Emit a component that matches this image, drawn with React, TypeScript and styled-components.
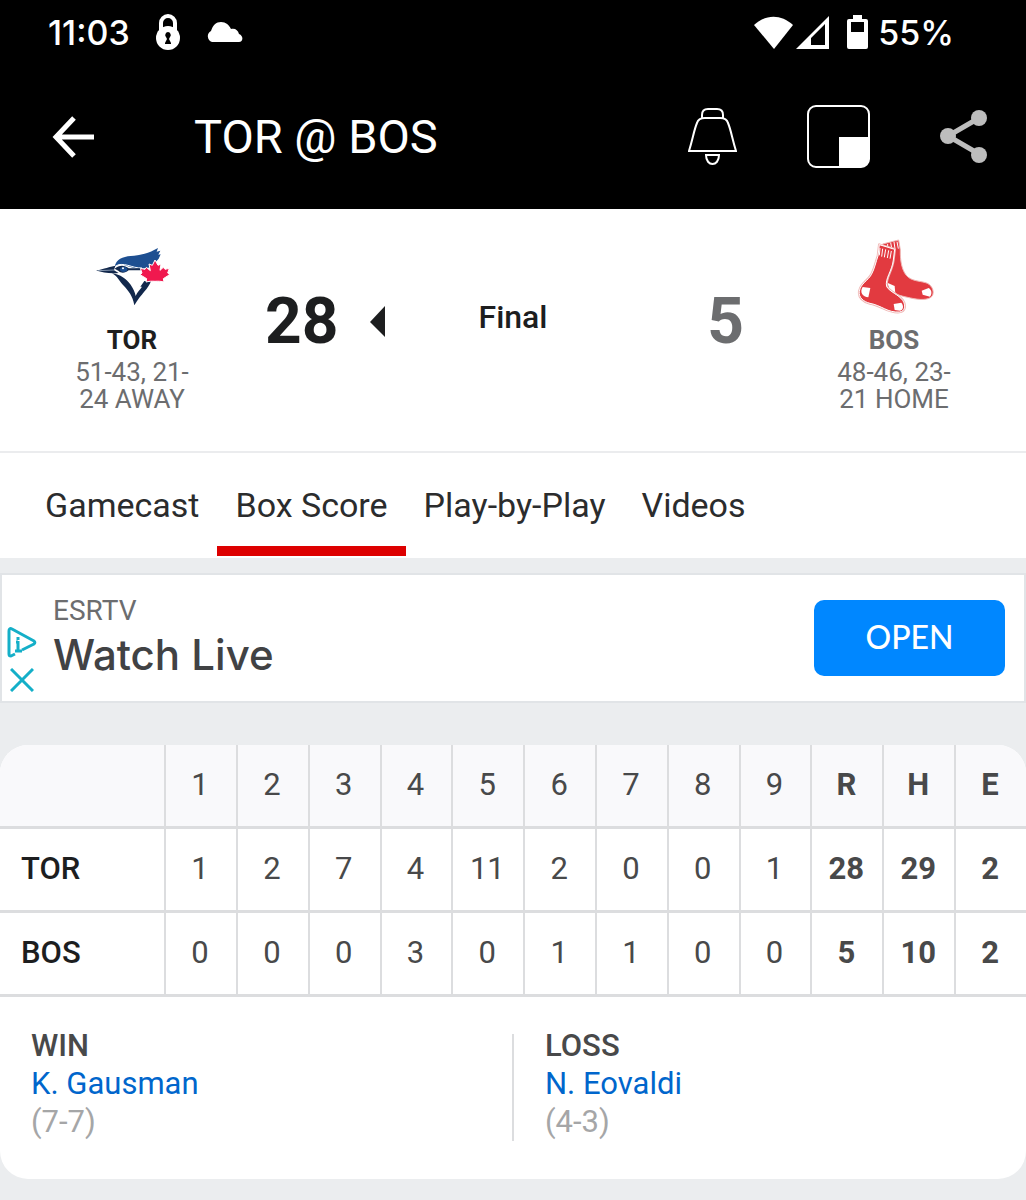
import React, { FC } from "react";
import styled, { createGlobalStyle } from "styled-components";

const GlobalStyle = createGlobalStyle`
  *,
  *::before,
  *::after {
    box-sizing: border-box;
  }

  body {
    margin: 0;
    background-color: #ebedef;
    color: #48494a;
    font-family: Roboto, "Liberation Sans", sans-serif;
  }

  button {
    border: 0;
    padding: 0;
    background: none;
    color: inherit;
    font: inherit;
    cursor: pointer;
  }

  svg {
    display: block;
    flex-shrink: 0;
  }
`;

const TopBar = styled.header`
  background-color: #000;
  color: #fff;
`;

const StatusBar = styled.div`
  display: flex;
  align-items: center;
  justify-content: space-between;
  height: 64px;
  padding: 0 72px 0 48px;
  font-family: Inter, "Liberation Sans", sans-serif;
  font-size: 34px;
  font-weight: 500;
`;

const StatusGroup = styled.div<{ $gap: number }>`
  display: flex;
  align-items: center;
  gap: ${({ $gap }) => $gap}px;
`;

const Toolbar = styled.div`
  display: flex;
  align-items: center;
  height: 145px;
  padding: 0 38px 0 52px;
`;

const Title = styled.h1`
  flex-grow: 1;
  margin: 0 0 0 99px;
  font-size: 47px;
  font-weight: 400;
`;

const Actions = styled.div`
  display: flex;
  align-items: center;
  gap: 70px;
`;

const Matchup = styled.section`
  display: grid;
  grid-template-columns: 264px 1fr auto 1fr 264px;
  align-items: center;
  padding: 29px 0 38px;
  border-bottom: 2px solid #ebecee;
  background-color: #fff;
`;

const TeamStyles = styled.div<{ $winner?: boolean }>`
  display: flex;
  flex-direction: column;
  align-items: center;
  color: #6c6d6f;
  font-size: 26px;
  line-height: 27px;
  text-align: center;

  .team {
    &__logo {
      display: flex;
      align-items: center;
      height: 84px;
    }

    &__name {
      margin: 5px 0;
      color: ${({ $winner }) => ($winner ? "#1d1e1f" : "#6c6d6f")};
      font-weight: 700;
    }

    &__record {
      width: 130px;
    }
  }
`;

const Score = styled.div<{ $winner?: boolean }>`
  display: flex;
  align-items: center;
  justify-content: ${({ $winner }) => ($winner ? "flex-start" : "flex-end")};
  gap: 32px;
  padding: 0 18px 8px 1px;
  color: ${({ $winner }) => ($winner ? "#1d1e1f" : "#6c6d6f")};
  font-size: 64px;
  font-weight: 700;
`;

const GameStatus = styled.div`
  padding-bottom: 18px;
  color: #1d1e1f;
  font-size: 32px;
  font-weight: 500;
`;

const Tabs = styled.nav`
  display: flex;
  padding: 0 27px 2px;
  background-color: #fff;
`;

const Tab = styled.button<{ $active?: boolean }>`
  height: 103px;
  padding: 10px 18px 0;
  border-bottom: 10px solid ${({ $active }) => ($active ? "#d00" : "transparent")};
  color: #2b2c2d;
  font-size: 34px;
`;

const Ad = styled.aside`
  display: flex;
  align-items: center;
  justify-content: space-between;
  min-height: 130px;
  margin: 15px 0 42px;
  padding: 0 19px 0 5px;
  border: 2px solid #e1e4e7;
  background-color: #fff;
`;

const AdBody = styled.div`
  display: flex;
  align-items: center;
  gap: 16px;
`;

const AdControls = styled.div`
  display: flex;
  flex-direction: column;
  align-items: center;
  gap: 10px;
  padding-top: 42px;
`;

const AdText = styled.div`
  padding-top: 2px;

  .ad {
    &__brand {
      color: #6c6d6f;
      font-size: 28px;
      line-height: 32px;
    }

    &__headline {
      color: #414244;
      font-family: Inter, sans-serif;
      font-size: 42px;
      font-weight: 500;
      line-height: 56px;
    }
  }
`;

const OpenButton = styled.button`
  && {
    width: 191px;
    height: 76px;
    padding-bottom: 4px;
    border-radius: 10px;
    background-color: #0087ff;
    color: #fff;
    font-family: Lato, sans-serif;
    font-size: 32px;
    font-weight: 500;
  }
`;

const Card = styled.main`
  overflow: hidden;
  margin-bottom: 21px;
  border-radius: 28px;
  background-color: #fff;
`;

const LineScore = styled.table`
  width: 100%;
  border-collapse: separate;
  border-spacing: 0;
  table-layout: fixed;
  font-size: 31px;

  th,
  td {
    height: 84px;
    padding: 0 2px 2px 0;
    border-bottom: 3px solid #dcdddf;
    border-left: 2px solid #dcdddf;
    text-align: center;
  }

  thead th,
  thead td {
    background-color: #f9f9fb;
    font-weight: 400;
  }

  th:first-child,
  td:first-child {
    width: 16%;
    padding-left: 21px;
    border-left: 0;
    text-align: left;
  }

  tbody th {
    color: #1d1e1f;
    font-weight: 500;
  }

  thead th:nth-last-child(-n + 3),
  td:nth-last-child(-n + 3) {
    font-weight: 700;
  }
`;

const Decisions = styled.div`
  display: grid;
  grid-template-columns: 1fr 2px 1fr;
  padding: 30px 0 38px;
  font-size: 31px;
  line-height: 38px;
`;

const DecisionDivider = styled.div`
  margin-top: 7px;
  background-color: #dcdddf;
`;

const DecisionStyles = styled.div`
  padding-left: 31px;

  .decision {
    &__label {
      font-weight: 500;
    }

    &__record {
      color: #a5a6a7;
    }
  }

  a {
    color: #06c;
    text-decoration: none;
  }
`;

const LockIcon = () => (
  <svg width="24" height="37" viewBox="0 0 24 37" fill="none">
    <path d="M5 17V9a7 7 0 0 1 14 0v8" stroke="#fff" strokeWidth="4" />
    <circle cx="12" cy="24" r="12" fill="#fff" />
    <path d="M12 18a3 3 0 0 1 2 5l-1 2 2 4v1H9v-1l2-4-1-2a3 3 0 0 1 2-5z" fill="#000" />
  </svg>
);

const CloudIcon = () => (
  <svg width="37" height="21" viewBox="0 0 37 21" fill="#fff">
    <path d="M6 20a6 6 0 0 1-1-11C7 3 10 0 15 0c5 0 8 3 10 7 4-1 7 1 8 5 5 2 4 8 0 8z" />
  </svg>
);

const WifiIcon = () => (
  <svg width="39" height="33" viewBox="0 0 39 33" fill="#fff">
    <path d="M0 9C12-2 27-2 39 9L20 33z" />
  </svg>
);

const SignalIcon = () => (
  <svg width="33" height="33" viewBox="0 0 33 33">
    <path d="M33 0v33H0zM29 8 15 22v7h14z" fill="#fff" fillRule="evenodd" />
  </svg>
);

const BatteryIcon = () => (
  <svg width="21" height="34" viewBox="0 0 21 34">
    <path
      d="M6 0h9v4h4a2 2 0 0 1 2 2v26a2 2 0 0 1-2 2H2a2 2 0 0 1-2-2V6a2 2 0 0 1 2-2h4zM4 7v10h13V7z"
      fill="#fff"
      fillRule="evenodd"
    />
  </svg>
);

const BackIcon = () => (
  <svg width="43" height="42" viewBox="0 0 43 42" fill="none" stroke="#fff" strokeWidth="5">
    <path d="M22 2 4 21l18 19M4 21h38" />
  </svg>
);

const BellIcon = () => (
  <svg width="49" height="58" viewBox="0 0 49 58" fill="none" stroke="#fff" strokeWidth="2">
    <path d="M14 10V7c0-4 2-6 6-6h9c4 0 6 2 6 6v3" />
    <path d="M1 43C5 30 6 22 9 15c1-4 4-5 8-5h15c4 0 7 1 8 5 3 7 4 15 8 28z" />
    <path d="M18 47h13c0 12-13 12-13 0z" />
  </svg>
);

const MiniPlayerIcon = () => (
  <svg width="63" height="63" viewBox="0 0 63 63">
    <rect x="1" y="1" width="61" height="61" rx="8" fill="none" stroke="#fff" strokeWidth="2" />
    <path d="M32 32h30v22a8 8 0 0 1-8 8H32z" fill="#fff" />
  </svg>
);

const ShareIcon = () => (
  <svg width="48" height="53" viewBox="0 0 48 53" fill="#bdbdbd">
    <path d="M39 8 8 26l31 18" fill="none" stroke="#bdbdbd" strokeWidth="5" />
    <circle cx="8" cy="26" r="8" />
    <circle cx="39" cy="8" r="8" />
    <circle cx="39" cy="45" r="8" />
  </svg>
);

const WinnerArrow = () => (
  <svg width="15" height="31" viewBox="0 0 15 31" fill="#1d1e1f">
    <path d="M15 0v31L0 16z" />
  </svg>
);

const AdChoicesIcon = () => (
  <svg width="30" height="31" viewBox="0 0 30 31" fill="none" stroke="#14afc8" strokeWidth="3">
    <path d="M8 27 4 29c-1 0-2 0-2-2V4c0-2 1-3 3-2l22 12c1 1 1 2 0 3L15 23" strokeLinejoin="round" />
    <path d="M11 14v11M11 10v3M9 15h2M8 24h7" />
  </svg>
);

const CloseIcon = () => (
  <svg width="24" height="24" viewBox="0 0 24 24" stroke="#14afc8" strokeWidth="3">
    <path d="m1 1 22 22M23 1 1 23" />
  </svg>
);

const BlueJaysLogo = () => (
  <svg width="84" height="68" viewBox="0 12 252 204">
    <path
      d="M74 74C78 52 98 44 122 42C152 40 176 34 204 18L200 29L211 26L205 38L212 37L206 50L197 60L184 76L154 80C128 82 104 66 88 67Z"
      fill="#1d4f91"
    />
    <path d="M74 74C100 56 126 80 156 78" fill="none" stroke="#fff" strokeWidth="3" />
    <path d="M18 85C44 81 58 74 76 71L72 85L86 93C62 96 38 92 18 85Z" fill="#12284c" />
    <path d="M24 86L72 84" stroke="#8496ae" strokeWidth="3" />
    <path d="M74 80C86 69 104 68 116 79H154V85H116C106 94 92 94 86 87Z" fill="#12284c" />
    <ellipse cx="101" cy="82" rx="11" ry="8" fill="#1d4f91" />
    <circle cx="99" cy="79" r="3" fill="#fff" />
    <path
      d="M66 94C92 98 108 110 122 128C130 140 135 150 137 162C142 150 150 143 156 134H151L163 117H183C176 140 154 154 133 190C128 160 115 147 102 132C88 118 83 103 66 94Z"
      fill="#12284c"
    />
    <path
      d="M195 54L204 70L213 66L210 85L220 76L225 82L238 79L233 93L239 98L220 110L222 120C214 118 205 117 195 118C185 117 176 118 168 120L170 110L150 98L156 93L151 79L165 82L169 76L181 86L177 66L187 70Z"
      fill="#f0194f"
      stroke="#fff"
      strokeWidth="3"
    />
  </svg>
);

const RedSoxLogo = () => (
  <svg width="88" height="84" viewBox="90 24 264 252" strokeLinejoin="round">
    <path
      d="M188 42L236 30L241 60C240 95 247 128 265 142C282 155 306 153 322 160C338 168 344 187 336 199C325 211 298 210 272 204C248 199 228 194 216 186L190 160Z"
      fill="#e23a40"
      stroke="#f0b8b6"
      strokeWidth="3"
    />
    <path d="M202 158L224 168L226 192L210 182Z" fill="#fff" />
    <path d="M305 182L326 174C335 180 337 190 330 200L308 194Z" fill="#fff" />
    <path d="M203 42v12M212 38l3 16M222 36l3 20M231 35l4 21" fill="none" stroke="#fff" strokeWidth="3" />
    <path
      d="M178 44L224 58L220 90C216 124 194 146 200 170C210 186 236 194 248 211C258 226 256 244 238 246C204 249 184 226 150 220C130 215 115 202 118 184C122 160 144 152 154 134C164 116 168 94 174 78Z"
      fill="#e23a40"
      stroke="#f0b8b6"
      strokeWidth="8"
    />
    <path
      d="M178 44L224 58L220 90C216 124 194 146 200 170C210 186 236 194 248 211C258 226 256 244 238 246C204 249 184 226 150 220C130 215 115 202 118 184C122 160 144 152 154 134C164 116 168 94 174 78Z"
      fill="#e23a40"
      stroke="#fff"
      strokeWidth="3"
    />
    <path d="M180 54l-2 22M188 56l-3 24M197 58l-4 24M206 61l-4 23M214 63l-4 23" fill="none" stroke="#fff" strokeWidth="3" />
    <path d="M128 171L151 174L145 202C128 200 118 188 128 171Z" fill="#fff" />
    <path d="M221 222L244 218C252 228 250 240 240 242L224 240Z" fill="#fff" />
  </svg>
);

interface TeamProps {
  name: string;
  record: string;
  winner?: boolean;
  children: React.ReactNode;
}

const Team: FC<TeamProps> = ({ name, record, winner, children }) => (
  <TeamStyles $winner={winner}>
    <div className="team__logo">{children}</div>
    <div className="team__name">{name}</div>
    <div className="team__record">{record}</div>
  </TeamStyles>
);

interface DecisionProps {
  label: string;
  pitcher: string;
  record: string;
}

const Decision: FC<DecisionProps> = ({ label, pitcher, record }) => (
  <DecisionStyles>
    <div className="decision__label">{label}</div>
    <a href="#player">{pitcher}</a>
    <div className="decision__record">{record}</div>
  </DecisionStyles>
);

const tabs = ["Gamecast", "Box Score", "Play-by-Play", "Videos"];
const columns = ["1", "2", "3", "4", "5", "6", "7", "8", "9", "R", "H", "E"];
const lines = [
  { team: "TOR", values: [1, 2, 7, 4, 11, 2, 0, 0, 1, 28, 29, 2] },
  { team: "BOS", values: [0, 0, 0, 3, 0, 1, 1, 0, 0, 5, 10, 2] },
];

const App: FC = () => (
  <>
    <GlobalStyle />
    <TopBar>
      <StatusBar>
        <StatusGroup $gap={26}>
          <span>11:03</span>
          <LockIcon />
          <CloudIcon />
        </StatusGroup>
        <StatusGroup $gap={10}>
          <StatusGroup $gap={18}>
            <StatusGroup $gap={3}>
              <WifiIcon />
              <SignalIcon />
            </StatusGroup>
            <BatteryIcon />
          </StatusGroup>
          <span>55%</span>
        </StatusGroup>
      </StatusBar>
      <Toolbar>
        <button aria-label="Back">
          <BackIcon />
        </button>
        <Title>TOR @ BOS</Title>
        <Actions>
          <button aria-label="Alerts">
            <BellIcon />
          </button>
          <button aria-label="Mini player">
            <MiniPlayerIcon />
          </button>
          <button aria-label="Share">
            <ShareIcon />
          </button>
        </Actions>
      </Toolbar>
    </TopBar>

    <Matchup>
      <Team name="TOR" record="51-43, 21-24 AWAY" winner>
        <BlueJaysLogo />
      </Team>
      <Score $winner>
        28
        <WinnerArrow />
      </Score>
      <GameStatus>Final</GameStatus>
      <Score>5</Score>
      <Team name="BOS" record="48-46, 23-21 HOME">
        <RedSoxLogo />
      </Team>
    </Matchup>

    <Tabs>
      {tabs.map((tab) => (
        <Tab key={tab} $active={tab === "Box Score"}>
          {tab}
        </Tab>
      ))}
    </Tabs>

    <Ad>
      <AdBody>
        <AdControls>
          <button aria-label="Ad choices">
            <AdChoicesIcon />
          </button>
          <button aria-label="Close ad">
            <CloseIcon />
          </button>
        </AdControls>
        <AdText>
          <div className="ad__brand">ESRTV</div>
          <div className="ad__headline">Watch Live</div>
        </AdText>
      </AdBody>
      <OpenButton>OPEN</OpenButton>
    </Ad>

    <Card>
      <LineScore>
        <thead>
          <tr>
            <td />
            {columns.map((column) => (
              <th key={column} scope="col">
                {column}
              </th>
            ))}
          </tr>
        </thead>
        <tbody>
          {lines.map(({ team, values }) => (
            <tr key={team}>
              <th scope="row">{team}</th>
              {values.map((value, i) => (
                <td key={columns[i]}>{value}</td>
              ))}
            </tr>
          ))}
        </tbody>
      </LineScore>
      <Decisions>
        <Decision label="WIN" pitcher="K. Gausman" record="(7-7)" />
        <DecisionDivider />
        <Decision label="LOSS" pitcher="N. Eovaldi" record="(4-3)" />
      </Decisions>
    </Card>
  </>
);

export default App;
